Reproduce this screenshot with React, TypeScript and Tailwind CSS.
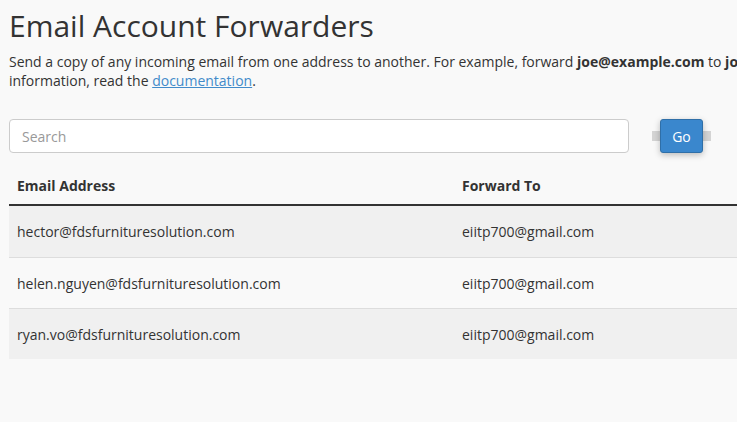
const rows = [
  { email: 'hector@fdsfurnituresolution.com', to: 'eiitp700@gmail.com' },
  { email: 'helen.nguyen@fdsfurnituresolution.com', to: 'eiitp700@gmail.com' },
  { email: 'ryan.vo@fdsfurnituresolution.com', to: 'eiitp700@gmail.com' },
];

export default function App() {
  return (
    <div className="h-[422px] w-[737px] overflow-hidden bg-[#f9f9f9] font-['Open_Sans',sans-serif] text-[#333]">
      <div className="w-[940px] pl-[9px]">
        <h1 className="pt-[8px] text-[30px] leading-[35px] text-[#333]">Email Account Forwarders</h1>
        <p className="mt-[9px] text-[14px] leading-[19px]">
          Send a copy of any incoming email from one address to another. For example, forward{' '}
          <b>joe@example.com</b> to <b>joe@example.net</b>. For more information, read the{' '}
          <a href="#" className="text-[#428bca] underline">documentation</a>.
        </p>

        {/* search */}
        <div className="mt-[29px] flex items-center">
          <input
            type="text"
            placeholder="Search"
            className="h-[34px] w-[620px] rounded-[4px] border border-[#ccc] bg-white px-3 text-[14px] outline-none placeholder:text-[#999]"
          />
          <div className="relative ml-[23px] flex h-[34px] w-[59px] items-center justify-center">
            <div className="h-[10px] w-full bg-[#d4d4d4]" />
            <button className="absolute left-[8px] top-0 h-[34px] w-[43px] rounded-[3px] border border-[#2f6fa8] bg-[#3a87cd] text-[14px] text-white shadow-[0_2px_6px_rgba(0,0,0,0.25)]">
              Go
            </button>
          </div>
        </div>

        {/* table */}
        <div className="text-[14px]">
          <div className="flex h-[53px] items-end border-b-[2px] border-[#333] pb-[8px] font-bold">
            <div className="w-[445px] px-2">Email Address</div>
            <div className="px-2">Forward To</div>
          </div>
          {rows.map((r, i) => (
            <div
              key={r.email}
              className={`flex h-[51px] items-center border-[#ddd] ${i > 0 ? 'border-t' : ''} ${i % 2 === 0 ? 'bg-[#f0f0f0]' : 'bg-[#f9f9f9]'}`}
            >
              <div className="w-[445px] px-2">{r.email}</div>
              <div className="px-2">{r.to}</div>
            </div>
          ))}
        </div>
      </div>
    </div>
  );
}
